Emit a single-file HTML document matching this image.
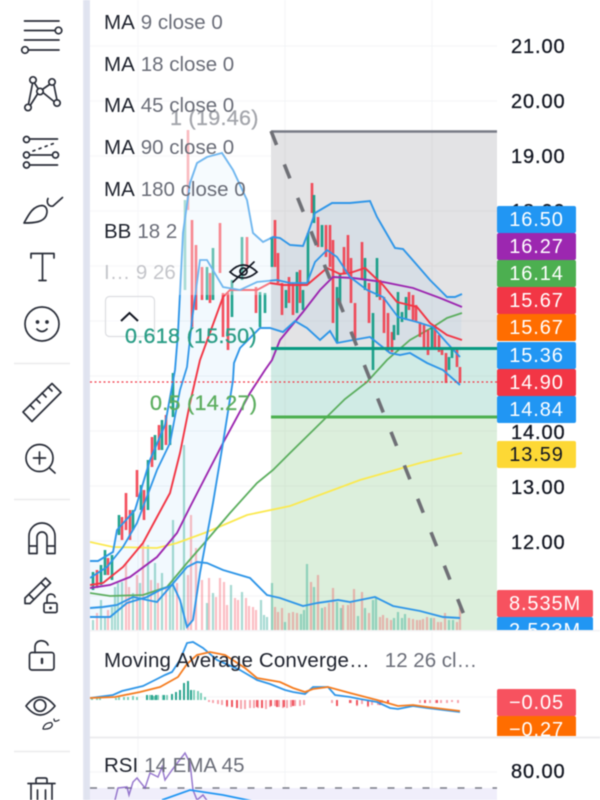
<!DOCTYPE html>
<html><head><meta charset="utf-8"><style>
html,body{margin:0;padding:0;background:#fff}
#r{position:relative;width:600px;height:800px;overflow:hidden;background:#fff;font-family:"Liberation Sans",sans-serif;filter:blur(.4px)}
svg{position:absolute;left:0;top:0}
.t{position:absolute;white-space:nowrap;font-size:20.5px;line-height:24px;color:#6a6d78}
.t b{font-weight:normal;color:#1e222d;margin-right:6px}
.ax{position:absolute;left:511px;font-size:20px;letter-spacing:.9px;line-height:24px;color:#131722;-webkit-text-stroke:.3px #131722}
.tag{position:absolute;left:497px;width:79px;height:27px;border-radius:2px;color:#fff;font-size:20px;letter-spacing:.9px;line-height:29px;text-align:center;box-sizing:border-box}
.f{position:absolute;white-space:nowrap;font-size:21.5px;line-height:24px;letter-spacing:.3px;-webkit-text-stroke:.3px currentColor}
</style></head><body><div id="r">
<svg width="600" height="800" viewBox="0 0 600 800" fill="none">
<defs>
<clipPath id="m"><rect x="90" y="0" width="407" height="630"/></clipPath>
<clipPath id="p2"><rect x="90" y="632" width="407" height="105"/></clipPath>
<clipPath id="p3"><rect x="90" y="739" width="407" height="61"/></clipPath>
<linearGradient id="st" x1="0" x2="1" y1="0" y2="0"><stop offset="0" stop-color="#e9ebf4"/><stop offset=".3" stop-color="#dfe2ef"/><stop offset="1" stop-color="#e2e5f1"/></linearGradient>
</defs>
<rect x="83" y="0" width="7" height="800" fill="url(#st)"/>
<!-- grid -->
<g stroke="#f3f4f6" stroke-width="1">
<path d="M90 46H497M90 101H497M90 156H497M90 211H497M90 266H497M90 321H497M90 376H497M90 431H497M90 486H497M90 541H497M90 596H497"/>
<path d="M138 0V630M285 0V630M432 0V630M138 632V800M285 632V800M432 632V800M90 697H497M90 772H497"/>
</g>
<g clip-path="url(#m)">
<rect x="271" y="131" width="226" height="217" fill="#e3e3e5"/>
<rect x="271" y="348" width="226" height="69" fill="#d0ebe5"/>
<rect x="271" y="417" width="226" height="213" fill="#dcefdc"/>
<path d="M271 211H497M271 266H497M271 321H497M271 376H497M271 431H497M271 486H497M271 541H497M271 596H497M285 131V630M432 131V630" stroke="#000" stroke-opacity=".03"/>
<!-- BB fill -->
<path d="M90 561L98 561 113 552 117 530 135 510 150 460 165 425 175 370 178 333 183 233 190 183 197 163 207 157 222 153 233 170 247 200 253 233 263 242 273 237 280 238 290 245 303 246 308 233 315 213 332 203 350 203 370 201 377 217 395 248 403 249 417 265 430 280 440 290 447 297 455 297 462 294 460 385 443 370 427 363 410 353 400 355 390 353 370 337 353 340 337 343 330 331 320 340 307 328 295 321 283 332 270 328 260 328 240 348 234 363 233 380 223 443 213 503 200 573 193 620 187 627 180 600 173 585 160 590 147 597 127 603 110 617 90 617Z" fill="#2196f3" fill-opacity=".06"/>
<!-- volume -->
<path stroke="#089981" stroke-opacity=".36" stroke-width="2.2" d="M93 630V620M101 630V600M105 630V618M112 630V607M115 630V587M118 630V583M122 630V582M133 630V593M140 630V583M148 630V545M155 630V563M162 630V573M170 630V583M173 630V520M181 630V603M184 630V445M207 630V603M213 630V593M231 630V585M242 630V592M261 630V600M264 630V615M267 630V617M272 630V583M285 630V622M301 630V614M304 630V610M307 630V564M314 630V587M322 630V608M337 630V602M341 630V608M358 630V616M365 630V608M373 630V600M376 630V598M394 630V618M398 630V612M402 630V618M405 630V614M431 630V618M449 630V620M453 630V620"/>
<path stroke="#f23645" stroke-opacity=".32" stroke-width="2.2" d="M97 630V613M108 630V610M126 630V563M129 630V587M137 630V575M143 630V543M151 630V580M158 630V583M166 630V587M177 630V583M188 630V575M191 630V515M196 630V548M202 630V580M209 630V578M216 630V597M220 630V578M224 630V582M227 630V605M235 630V598M238 630V600M246 630V598M249 630V606M253 630V607M256 630V610M275 630V607M278 630V612M282 630V608M289 630V613M293 630V612M297 630V613M311 630V582M318 630V575M325 630V607M329 630V603M333 630V588M343 630V605M348 630V605M351 630V603M354 630V589M362 630V592M369 630V613M380 630V617M383 630V615M387 630V618M391 630V620M409 630V618M413 630V619M417 630V620M420 630V620M423 630V619M427 630V617M434 630V618M438 630V622M441 630V622M445 630V613M457 630V622M460 630V603"/>
<!-- yellow MA180 -->
<polyline stroke="#fbe94f" stroke-width="1.8" points="90,542 113,547 157,548 177,543 207,532 247,515 290,506 360,480 420,463 462,453"/>
<!-- green MA90 -->
<polyline stroke="#5cae5f" stroke-width="1.8" points="90,593 110,596 143,595 167,587 187,563 207,540 230,513 257,483 273,470 290,453 345,399 367,382 387,360 410,340 433,327 447,318 462,313"/>
<!-- candles -->
<path stroke="#f23645" stroke-opacity=".88" stroke-width="2.6" d="M97 570V588M108 558V575M122 517V540M126 493V530M130 510V540M137 470V497M144 490V520M152 437V467M159 425V450M166 415V445M196 245V310M192 220V327M202 267V300M210 273V303M220 223V273M223 293V337M228 293V350M247 237V267M256 287V313M275 220V267M278 253V283M282 283V315M289 277V303M293 283V315M300 270V303M312 183V213M318 217V247M326 225V257M330 225V267M333 240V323M344 247V273M348 235V273M351 258V303M355 303V340M362 242V280M369 283V323M380 280V300M384 297V333M388 313V352M392 332V352M409 292V310M413 295V320M416 305V322M420 322V337M424 325V347M428 330V355M435 325V350M439 335V352M442 347V355M446 353V383M457 349V367M460 367V383"/>
<path stroke="#f23645" stroke-opacity=".5" stroke-width="2.6" d="M188 130V210"/>
<path stroke="#089981" stroke-opacity=".9" stroke-width="2.6" d="M93 572V590M101 565V585M105 550V575M112 555V580M119 515V535M133 510V530M141 485V510M148 460V510M155 435V460M162 420V450M170 425V445M173 373V417M207 267V300M213 248V300M232 280V317M242 237V280M260 292V327M265 293V313M272 238V267M286 290V308M297 272V313M303 290V310M308 233V283M314 195V223M322 225V247M337 287V343M340 273V303M365 258V290M373 313V370M377 258V297M394 325V340M398 292V335M402 312V322M406 297V320M432 327V350M449 357V370M452 350V358"/>
<path stroke="#089981" stroke-opacity=".5" stroke-width="2.6" d="M185 200V290"/>
<!-- purple MA45 -->
<polyline stroke="#9c27b0" stroke-width="1.9" points="90,588 110,585 130,577 157,557 177,533 190,507 223,443 250,393 265,370 272,360 280,340 303,312 320,290 333,277 353,278 383,282 413,288 440,298 462,307"/>
<!-- red MA18 -->
<polyline stroke="#f23645" stroke-width="1.9" points="90,585 103,583 123,567 143,543 157,517 170,493 180,453 190,403 200,360 223,297 230,290 257,290 270,283 283,285 307,285 327,268 340,274 350,273 365,268 383,285 397,302 417,307 430,323 447,335 462,340"/>
<!-- blue MA9 -->
<polyline stroke="#2f96e8" stroke-width="1.8" points="90,578 107,567 123,547 137,523 157,470 170,443 180,390 187,367 192,320 200,260 207,260 223,287 240,290 257,282 277,280 290,283 307,283 315,262 327,250 337,257 350,277 367,290 383,297 398,317 417,322 433,327 447,343 460,357"/>
<!-- BB upper / lower -->
<polyline stroke="#2f96e8" stroke-width="1.9" points="90,561 98,561 113,552 117,530 135,510 150,460 165,425 175,370 178,333 183,233 190,183 197,163 207,157 222,153 233,170 247,200 253,233 263,242 273,237 280,238 290,245 303,246 308,233 315,213 332,203 350,203 370,201 377,217 395,248 403,249 417,265 430,280 440,290 447,297 455,297 462,294"/>
<polyline stroke="#2f96e8" stroke-width="1.9" points="90,617 110,617 127,603 147,597 160,590 173,585 180,600 187,627 193,620 200,573 213,503 223,443 233,380 234,363 240,348 260,328 270,328 283,332 295,321 307,328 320,340 330,331 337,343 353,340 370,337 390,353 400,355 410,353 427,363 443,370 460,385"/>
<!-- volume MA -->
<polyline stroke="#2f96e8" stroke-width="1.9" points="90,608 103,607 117,605 133,597 147,600 157,602 170,587 187,567 197,562 207,563 223,570 250,578 267,595 280,598 303,606 317,603 338,600 350,602 375,597 393,606 420,611 443,617 460,618"/>
<!-- fib lines -->
<path d="M271 131.5H497" stroke="#787b86" stroke-width="2.6"/>
<path d="M271 348.5H497" stroke="#089981" stroke-width="3"/>
<path d="M271 417H497" stroke="#4caf50" stroke-width="3"/>
<path d="M271 131L472 635" stroke="#6f7076" stroke-width="3.6" stroke-dasharray="15 21"/>
<path d="M90 382H497" stroke="#f23645" stroke-width="1.2" stroke-dasharray="2 2.5"/>
<!-- pale wash behind the legend -->
<rect x="90" y="0" width="180" height="295" fill="#fff" fill-opacity=".32"/>
</g>
<!-- panel separators -->
<rect x="90" y="630" width="510" height="1.500" fill="#f3f3f5"/>
<rect x="90" y="736.500" width="510" height="2" fill="#ececef"/>
<!-- MACD -->
<g clip-path="url(#p2)">
<path stroke="#7dd0ba" stroke-width="2" d="M92 700V698M97 700V698M100 700V698M116 700V698M119 700V697M124 700V697M128 700V697M133 700V696M137 700V697M147 700V696M150 700V695M154 700V696M158 700V695M163 700V695M167 700V695M172 700V694M194 700V690M198 700V691M201 700V693M205 700V697"/>
<path stroke="#2aa48f" stroke-width="2" d="M147 700V695M152 700V695M156 700V695M164 700V695M172 700V694M176 700V692M180 700V690M184 700V683M188 700V681M191 700V690"/>
<path stroke="#f6a5ad" stroke-width="2" d="M209 700V702M213 700V703M218 700V704M222 700V705M227 700V707M232 700V707M237 700V708M241 700V709M245 700V709M250 700V708M254 700V708M258 700V708M262 700V708M266 700V709M270 700V707M275 700V706M279 700V707M283 700V708M287 700V708M291 700V707M295 700V706M300 700V706M304 700V705M332 700V703M337 700V706M351 700V703M357 700V706M362 700V704M368 700V707M372 700V705M378 700V705M382 700V703M388 700V704M420 700V703M425 700V703M430 700V703M436 700V703M441 700V703M447 700V703M452 700V702M458 700V703"/>
<path stroke="#f0545f" stroke-width="2" d="M227 700V706M232 700V707M237 700V708M257 700V707M262 700V708M271 700V706M277 700V707M284 700V707M293 700V706M337 700V706M350 700V703M357 700V705M368 700V706M380 700V705M388 700V703M425 700V703M437 700V703"/>
<polyline stroke="#2f96e8" stroke-width="1.8" points="90,698 113,695 122,691 143,686 155,680 165,675 172,672 180,660 187,643 193,642 203,648 217,660 240,670 257,680 270,684 285,690 293,692 305,694 313,687 328,687 335,695 350,697 360,699 377,702 390,708 398,709 413,706 427,708 460,712"/>
<polyline stroke="#f57c1f" stroke-width="1.8" points="90,698 115,697 140,692 160,687 178,677 187,664 197,655 210,652 225,655 245,668 257,678 280,682 293,688 305,692 313,689 328,687 350,693 377,700 398,706 413,705 427,707 460,711"/>
</g>
<!-- RSI -->
<g clip-path="url(#p3)">
<rect x="90" y="788" width="407" height="12" fill="#f0eefb"/>
<path d="M90 788H497" stroke="#787b86" stroke-width="1.400" stroke-dasharray="7 10.500"/>
<polyline stroke="#7e57c2" stroke-opacity=".8" stroke-width="1.500" points="115,800 118,788 127,787 129,795 133,782 137,778 145,788 150,773 158,777 162,767 165,780 172,770 185,753 190,763 193,790 197,800 203,795 208,802"/>
<polyline stroke="#2196f3" stroke-width="1.800" points="162,800 190,790 223,795 257,802"/>
</g>
<!-- side icons -->
<g stroke="#2a2e39" stroke-width="1.700" stroke-linecap="round" stroke-linejoin="round">
<path d="M24.500 21H59M24.500 30.500H55M24.500 40H59M28.500 50H59"/>
<circle cx="58.500" cy="30.500" r="3.300"/><circle cx="25" cy="50" r="3.300"/>
<path d="M32.500 83.500L28.500 104M34.500 83L38 88.500M49.500 84.500L43 89M54 85.500L57 100M37.500 94L30.500 105M43.500 93L54 101.500"/>
<circle cx="33" cy="80" r="3.200"/><circle cx="52" cy="82" r="3.200"/><circle cx="40" cy="91.500" r="3.200"/><circle cx="28" cy="107.500" r="3.200"/><circle cx="57" cy="103" r="3.200"/>
<path d="M29.500 139H57.500M29.500 155H52M29.500 165H57.500"/>
<path d="M33 151L55 143" stroke-dasharray="2 4.500"/>
<circle cx="26.500" cy="139.500" r="3"/><circle cx="26.500" cy="155" r="3"/><circle cx="55.500" cy="155" r="3"/><circle cx="26.500" cy="165" r="3"/>
<path d="M24 223C29 214 33 206 42 205.500C47 206 48 211 46 216C43 222 35 223 24 223Z"/>
<path d="M48 198.500C46 203 49 207 53 206L62.500 197.500"/>
<path d="M31 258V253.500H54V258M42.500 253.500V280.500M39 280.500H46"/>
<circle cx="42" cy="324" r="17"/>
<path d="M37 329Q42 334 47 329"/>
<circle cx="37.500" cy="322" r="1" fill="#2a2e39"/><circle cx="47" cy="322" r="1" fill="#2a2e39"/>
<path d="M23 412L52 383.500 61 392.500 32 421.500Z"/>
<path d="M30 405L34 409M36 399L40 403M42 393L46 397M48 387L52 391"/>
<circle cx="39.500" cy="458" r="13.500"/>
<path d="M39.500 452V464M33.500 458H45.500M49.500 468L55 473"/>
<path d="M29 553.500V536A13 13 0 0 1 55 536V553.500H47V537A5 5 0 0 0 37 537V553.500ZM29 546H37M47 546H55"/>
<path d="M45.500 578L50.500 583 30 603.500 25 603.500 25 598ZM41 582.500L46 587.500M29 594.500L34 599.500"/>
<rect x="44" y="603" width="13" height="9.500" rx="1.500"/>
<path d="M47 603V598C47 593 54 593 55 597"/>
<circle cx="50.500" cy="608" r=".6" fill="#2a2e39"/>
<rect x="29.500" y="652.500" width="24.500" height="17.500" rx="2.500"/>
<path d="M35 652.500V647C35 639 46 639 48 645"/>
<path d="M42 659V663" stroke-width="2.400"/>
<path d="M26 706Q40 688 55 706Q40 724 26 706Z"/>
<circle cx="40" cy="705.500" r="5.800"/>
<path d="M43 729Q44 723 51 722.500Q54 725 50 728Q47 729.500 43 729Z" stroke-width="1.300"/>
<path d="M54 719Q54 723 59 720" stroke-width="1.300"/>
<path d="M28 783.500H55M36 783V779.500Q36 778 38 778H45Q47 778 47 779.500V783M31 784V802M52 784V802M37.500 790V802M45.500 790V802"/>
</g>
<path d="M14 363.500H70M14 499.500H70M14 751.500H70" stroke="#ebebed" stroke-width="1.500"/>
<!-- eye-slash -->
<g stroke="#131722" stroke-width="1.700" fill="none" stroke-linecap="round">
<path d="M230 272Q243 258 257 272Q243 284 230 272Z"/>
<circle cx="243.500" cy="271.500" r="3.500"/>
<path d="M233 282L254 262"/>
</g>
<rect x="105.500" y="296.500" width="49" height="40" rx="4" fill="#fff" fill-opacity=".55" stroke="#dcdde1" stroke-width="1.200"/>
<path d="M121 321L129.500 313 138 321" stroke="#131722" stroke-width="2" fill="none"/>
</svg>

<div class="f" style="left:170px;top:106px;color:#a3a5ab">1 (19.46)</div>
<div class="f" style="left:125px;top:324px;color:#2a9d86">0.618 (15.50)</div>
<div class="f" style="left:150px;top:391px;color:#5cae5f">0.5 (14.27)</div>

<div class="t" style="left:104px;top:11px"><b>MA</b>9 close 0</div>
<div class="t" style="left:104px;top:53px"><b>MA</b>18 close 0</div>
<div class="t" style="left:104px;top:94px"><b>MA</b>45 close 0</div>
<div class="t" style="left:104px;top:136px"><b>MA</b>90 close 0</div>
<div class="t" style="left:104px;top:178px"><b>MA</b>180 close 0</div>
<div class="t" style="left:104px;top:220px"><b>BB</b>18 2</div>
<div class="t" style="left:104px;top:261px;color:#c4c5ca">I…&nbsp;9 26</div>
<div class="t" style="left:104px;top:649px"><b style="margin-right:15px;letter-spacing:.17px">Moving Average Converge…</b>12 26 cl…</div>
<div class="t" style="left:104px;top:754px"><b>RSI</b>14 EMA 45</div>

<div class="ax" style="top:35px">21.00</div>
<div class="ax" style="top:90px">20.00</div>
<div class="ax" style="top:145px">19.00</div>
<div class="ax" style="top:200px">18.00</div>
<div class="ax" style="top:421px">14.00</div>
<div class="ax" style="top:476px">13.00</div>
<div class="ax" style="top:531px">12.00</div>
<div class="ax" style="top:760px">80.00</div>

<div class="tag" style="top:206px;background:#2196f3">16.50</div>
<div class="tag" style="top:233px;background:#9c27b0">16.27</div>
<div class="tag" style="top:260px;background:#4caf50">16.14</div>
<div class="tag" style="top:287px;background:#f23645">15.67</div>
<div class="tag" style="top:314px;background:#ff6d00">15.67</div>
<div class="tag" style="top:342px;background:#2196f3">15.36</div>
<div class="tag" style="top:369px;background:#f23645">14.90</div>
<div class="tag" style="top:396px;background:#2196f3">14.84</div>
<div class="tag" style="top:441px;background:#fdd835;color:#131722">13.59</div>

<div style="position:absolute;left:497px;top:590px;width:96px;height:40px;overflow:hidden">
<div class="tag" style="left:0;top:0;width:96px;background:#f7525f">8.535M</div>
<div class="tag" style="left:0;top:27px;width:96px;background:#2196f3">2.523M</div>
</div>
<div style="position:absolute;left:497px;top:689px;width:79px;height:47px;overflow:hidden">
<div class="tag" style="left:0;top:0;background:#f7525f">−0.05</div>
<div class="tag" style="left:0;top:27px;background:#ff6d00">−0.27</div>
</div>
</div></body></html>
